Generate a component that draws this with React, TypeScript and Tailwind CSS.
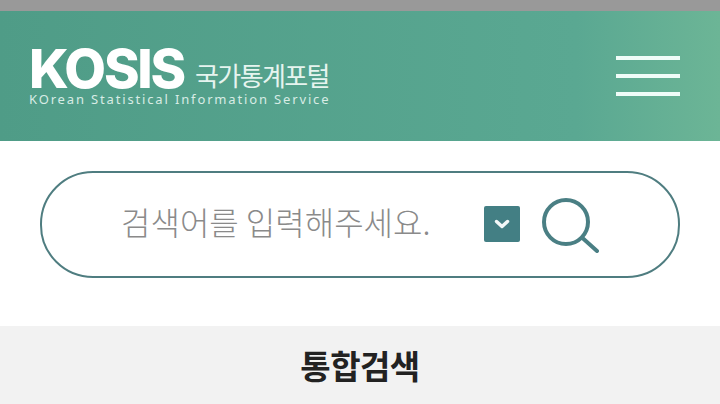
const kr = "font-['Noto_Sans_CJK_KR','Noto_Sans',sans-serif]";

const SearchIcon = () => (
  <svg className="mt-[2px]" width="57" height="55" viewBox="0 0 57 55" fill="none" stroke="#4a7f84" strokeLinecap="round">
    <circle cx="24" cy="24" r="22" strokeWidth="4" />
    <path d="M40.5 40 L55 53" strokeWidth="4" />
  </svg>
);

export default function App() {
  return (
    <div className="w-[720px] h-[404px] overflow-hidden bg-white flex flex-col">
      <div className="h-[11px] bg-[#999999]" />
      <header className="h-[130px] bg-gradient-to-r from-[#4f9c87] via-[#5aa892] via-80% to-[#6cb596] flex items-center justify-between pl-[29px] pr-[40px]">
        <div className="flex flex-col text-white pt-[3px]">
          <div className="flex items-end h-[42px]">
            <span className="font-['Inter',sans-serif] font-extrabold text-[54px] leading-[42px] tracking-[-2.2px] w-[166px]">
              KOSIS
            </span>
            <span className={`${kr} text-[26px] leading-[30px] tracking-[-1.6px] text-[#e6f4ef]`}>
              국가통계포털
            </span>
          </div>
          <span className="font-['Noto_Sans',sans-serif] text-[13px] leading-[15px] mt-[2px] tracking-[1.85px] text-[#d8ece5]">
            KOrean Statistical Information Service
          </span>
        </div>
        <div className="w-16 flex flex-col gap-[14px]">
          <div className="h-1 bg-[#effcf8]" />
          <div className="h-1 bg-[#effcf8]" />
          <div className="h-1 bg-[#effcf8]" />
        </div>
      </header>
      <div className="h-[185px] px-10 pt-[30px]">
        <div className="h-[107px] rounded-[53px] border-[2.5px] border-[#4f7d80] flex items-center pl-[79px] pr-[79px]">
          <span className={`${kr} flex-1 text-[32px] font-light tracking-[0px] text-[#8a8a8a] leading-none mb-2`}>
            검색어를 입력해주세요.
          </span>
          <div className="w-9 h-9 rounded-[2px] bg-[#437f84] flex items-center justify-center mr-[22px] mb-[1px]">
            <svg width="16" height="11" viewBox="0 0 16 11" fill="none" stroke="#f2f8f8" strokeWidth="3.5" strokeLinecap="round" strokeLinejoin="round">
              <path d="M2.5 2.5 L8 7.5 L13.5 2.5" />
            </svg>
          </div>
          <SearchIcon />
        </div>
      </div>
      <div className="flex-1 bg-[#f2f2f2] flex items-center justify-center">
        <span className={`${kr} text-[33px] font-bold text-[#222222] leading-none tracking-[-0.5px]`}>통합검색</span>
      </div>
    </div>
  );
}
